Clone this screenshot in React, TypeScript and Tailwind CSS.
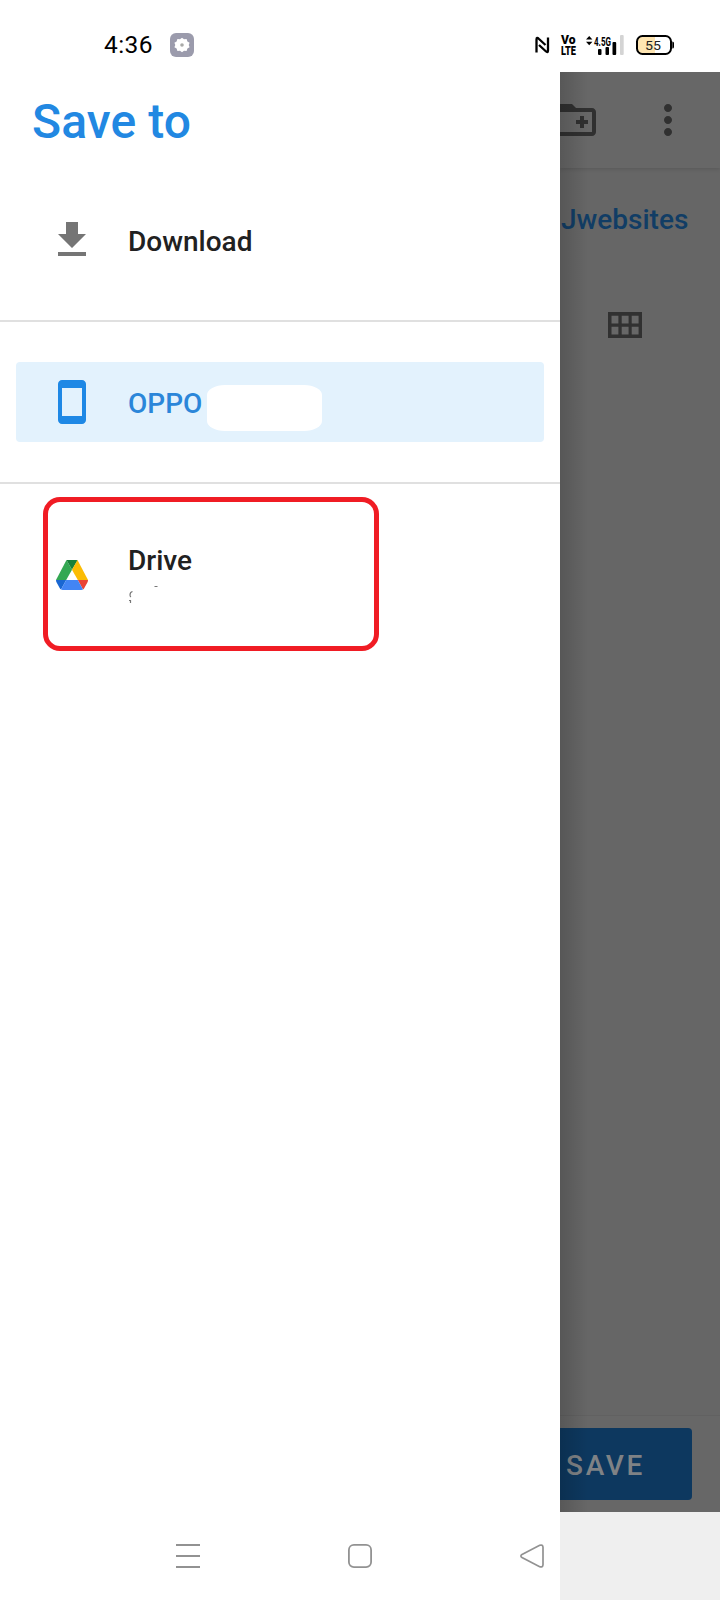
import React from "react";

function StatusBar() {
  return (
    <header className="flex h-[72px] shrink-0 items-center bg-white pt-[18px] pr-[44px] pl-[104px]">
      <div className="flex h-[54px] w-full items-start justify-between">
        <div className="flex items-center gap-[17px]">
          <span className="w-[49px] text-[24.5px] leading-[54px] tracking-[0.4px] whitespace-nowrap text-black">4:36</span>
          <svg width="24" height="24" viewBox="0 0 24 24">
            <rect width="24" height="24" rx="6" fill="#9b9bac" />
            <path
              d="M12 4.800l2 1.500 2.600-.3.8 2.500 2.200 1.300-.9 2.200.9 2.200-2.200 1.300-.8 2.500-2.600-.3-2 1.500-2-1.500-2.600.3-.8-2.500-2.200-1.300.9-2.200-.9-2.200 2.200-1.300.8-2.500 2.600.3z"
              fill="#fff"
            />
            <circle cx="12" cy="12" r="1.800" fill="#a9aaa8" />
          </svg>
        </div>
        <svg width="142" height="54" viewBox="534 18 142 54" className="font-[Roboto,sans-serif]">
          <path
            d="M536.500 52.500V39.500Q536.500 36.500 539 39L545.500 45M548 37.500V50.500Q548 53.500 545.500 51L539 45"
            fill="none"
            stroke="#000"
            strokeWidth="2.300"
            strokeLinejoin="round"
          />
          <text x="561" y="44.300" fontSize="13" fontWeight="900" textLength="14.500" lengthAdjust="spacingAndGlyphs">Vo</text>
          <text x="561" y="55" fontSize="13" fontWeight="900" textLength="15" lengthAdjust="spacingAndGlyphs">LTE</text>
          <path d="M586 39.500l3.200-3.500 3.200 3.500zM586 41.800l3.200 3.500 3.200-3.500z" />
          <text x="594" y="46" fontSize="13.500" fontWeight="700" textLength="17" lengthAdjust="spacingAndGlyphs">4.5G</text>
          <rect x="598" y="49" width="3.500" height="6" rx="1" />
          <rect x="605.500" y="47" width="3.500" height="8" rx="1" />
          <rect x="612.500" y="42" width="3.700" height="13" rx="1" />
          <rect x="620" y="35" width="3.700" height="20" rx="1" fill="#d4d4d4" />
          <rect x="637" y="36" width="34" height="18" rx="5.500" fill="#fff" />
          <path d="M655 36h-12.500a5.500 5.500 0 0 0-5.500 5.500v7a5.500 5.500 0 0 0 5.500 5.500H655z" fill="#fee5b2" />
          <rect x="637" y="36" width="34" height="18" rx="5.500" fill="none" stroke="#000" strokeWidth="2" />
          <path d="M672.300 41.500q1.700 0 1.700 1.500v4q0 1.500-1.700 1.500z" />
          <text x="645" y="49.600" fontSize="13.500" fill="#222" textLength="16" lengthAdjust="spacingAndGlyphs">55</text>
        </svg>
      </div>
    </header>
  );
}

function DriveLogo() {
  return (
    <svg width="32" height="30" viewBox="0 0 32 30">
      <path d="M10.500 0L0 20h10.200L16 9.700z" fill="#34a853" />
      <path d="M10.500 0Q11.200-.1 12 0h8q1 0 1.600.3L16 9.700z" fill="#188038" />
      <path d="M21.500.1L32 20H21.800L16 9.700z" fill="#fbbc04" />
      <path d="M0 20h10.200L5 29.600q-.7-.4-1.200-1.300L.5 22.200Q0 21.300 0 20z" fill="#1967d2" />
      <path d="M32 20H21.800L27 29.600q.7-.4 1.200-1.300l3.300-6.100q.5-.9.500-2.200z" fill="#ea4335" />
      <path d="M10.200 20h11.600L27 29.600q-.7.4-1.700.4H6.700q-1 0-1.700-.4z" fill="#4285f4" />
    </svg>
  );
}

function Drawer() {
  return (
    <aside className="flex w-[560px] shrink-0 flex-col bg-white">
      <h1 className="mt-[22px] ml-8 h-14 text-[48px] leading-[56px] font-medium tracking-[0.1px] whitespace-nowrap text-[#2288e2]">Save to</h1>
      <div className="mt-[50px] flex h-20 items-center pl-12 text-[#212121]">
        <svg width="48" height="48" viewBox="0 0 24 24" fill="#757575">
          <path d="M19 9h-4V3H9v6H5l7 7 7-7zM5 18v2h14v-2H5z" />
        </svg>
        <span className="mt-[2px] ml-8 text-[28px] leading-[33px] font-medium">Download</span>
      </div>
      <div className="mt-10 h-[2px] bg-[#e0e0e0]" />
      <div className="mx-4 mt-10 flex h-20 items-center rounded bg-[#e3f2fd] pl-8">
        <svg width="48" height="48" viewBox="0 0 24 24" fill="#1e88e5">
          <path d="M17 1H7c-1.100 0-2 .9-2 2v18c0 1.100.9 2 2 2h10c1.100 0 2-.9 2-2V3c0-1.100-.9-2-2-2zm0 18H7V5h10v14z" />
        </svg>
        <span className="mt-[2px] ml-8 w-[79px] text-[28px] leading-[33px] font-medium text-[#2b86d9]">OPPO</span>
        <span className="mt-3 h-[46px] w-[115px] rounded-[18px_/_10px] bg-white" />
      </div>
      <div className="mt-10 h-[2px] bg-[#e0e0e0]" />
      <div className="mt-[13px] ml-[43px] flex h-[154px] w-[336px] items-start rounded-[17px] border-[5px] border-[#f01c24] pl-2">
        <div className="mt-[58px]">
          <DriveLogo />
        </div>
        <div className="mt-[42px] ml-10 flex flex-col">
          <span className="text-[28px] leading-[33px] font-medium text-[#212121]">Drive</span>
          <svg width="40" height="26" viewBox="128 577 40 26" fill="none" stroke="#777" strokeWidth="1.200">
            <path d="M132.500 591.500q-2.500.5-2.500 3.500 0 1.500 1 2M129 600.500h2M130.500 600v3M154.500 586.500h3" />
          </svg>
        </div>
      </div>
      <nav className="mt-auto flex h-[88px] items-center gap-[148px] pl-[176px]">
        <svg width="24" height="26" viewBox="0 0 24 26" stroke="#929292" strokeWidth="2">
          <path d="M0 2h24M0 13h24M0 24h24" />
        </svg>
        <svg width="24" height="24" viewBox="0 0 24 24" fill="none" stroke="#929292" strokeWidth="1.800">
          <rect x=".9" y=".9" width="22.200" height="22.200" rx="5" />
        </svg>
        <svg width="24" height="24" viewBox="0 0 24 24" fill="none" stroke="#929292" strokeWidth="1.700">
          <path d="M2 10.400L19.700 1.300Q22.800.3 23 3.300V20.700Q22.800 23.700 19.700 22.700L2 13.600Q-.2 12 2 10.400z" />
        </svg>
      </nav>
    </aside>
  );
}

function DimmedPage() {
  return (
    <main className="flex w-[160px] shrink-0 flex-col bg-[#efefef]">
      <section className="relative flex h-[1440px] flex-col overflow-hidden bg-[#666]">
        <div className="flex h-24 shrink-0 items-center bg-[#676767] shadow-[0_1px_4px_rgba(0,0,0,0.14)]">
          <svg width="48" height="48" viewBox="0 0 24 24" className="-ml-2 shrink-0" fill="#303030">
            <path d="M20 6h-8l-2-2H4c-1.100 0-2 .9-2 2v12c0 1.100.9 2 2 2h16c1.100 0 2-.9 2-2V8c0-1.100-.9-2-2-2zm0 12H4V8h16v10zM12 14h2v2h2v-2h2v-2h-2v-2h-2v2h-2z" />
          </svg>
          <svg width="48" height="48" viewBox="0 0 24 24" className="ml-11" fill="#303030">
            <path d="M12 8c1.100 0 2-.9 2-2s-.9-2-2-2-2 .9-2 2 .9 2 2 2zm0 2c-1.100 0-2 .9-2 2s.9 2 2 2 2-.9 2-2-.9-2-2-2zm0 6c-1.100 0-2 .9-2 2s.9 2 2 2 2-.9 2-2-.9-2-2-2z" />
          </svg>
        </div>
        <div className="mt-[35px] ml-[1px] h-[33px] text-[28px] leading-[33px] font-medium text-[#113d65]">Jwebsites</div>
        <svg width="34" height="26" viewBox="0 0 34 26" className="mt-[76px] ml-12" fill="#676767">
          <rect width="34" height="26" fill="#313131" />
          <path d="M3.500 3.800h6.900v7.700H3.500zM13.700 3.800h6.900v7.700h-6.900zM23.700 3.800h6.900v7.700h-6.900zM3.500 14.700h6.900v7.700H3.500zM13.700 14.700h6.900v7.700h-6.900zM23.700 14.700h6.900v7.700h-6.900z" />
        </svg>
        <div className="mt-auto flex h-[97px] shrink-0 items-start border-t border-[#616161] bg-[#676767] pt-3">
          <div className="flex h-[72px] w-[132px] items-center rounded-r-[4px] bg-[#0d385f] pt-[2px] pl-[6px] text-[28px] leading-[33px] font-medium tracking-[2.700px] text-[#7f8285]">
            <span>SAVE</span>
          </div>
        </div>
        <div className="absolute inset-y-0 left-0 w-7 bg-gradient-to-r from-black/15 to-transparent" />
      </section>
    </main>
  );
}

export default function App() {
  return (
    <div className="flex h-[1600px] w-[720px] flex-col overflow-hidden bg-white font-[Roboto,sans-serif]">
      <StatusBar />
      <div className="flex flex-1">
        <Drawer />
        <DimmedPage />
      </div>
    </div>
  );
}
